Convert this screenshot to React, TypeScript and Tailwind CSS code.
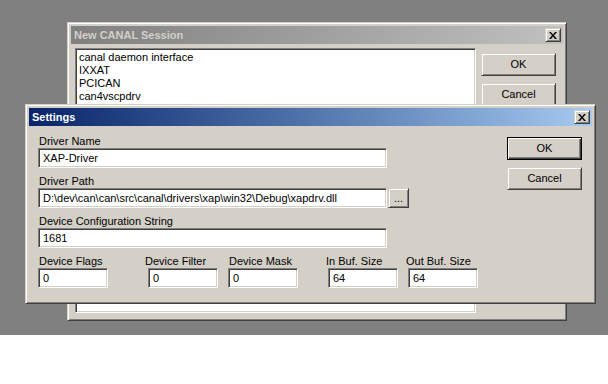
const font = "font-['Liberation_Sans',Arial,sans-serif]";

const raised =
  "bg-[#d4d0c8] border border-[#d4d0c8] border-r-[#404040] border-b-[#404040] shadow-[inset_1px_1px_0_#fff,inset_-1px_-1px_0_#808080]";
const sunken =
  "bg-white border border-[#808080] border-r-white border-b-white shadow-[inset_1px_1px_0_#404040,inset_-1px_-1px_0_#d4d0c8]";

const CloseBox = () => (
  <div className={`${raised} w-[16px] h-[14px] flex items-center justify-center`}>
    <svg width="8" height="7" viewBox="0 0 8 7">
      <path d="M0 0h2l2 2.5 2-2.5h2l-3 3.5 3 3.5h-2l-2-2.5-2 2.5h-2l3-3.5z" fill="#000" />
    </svg>
  </div>
);

const Button = ({ label, isDefault }: { label: string; isDefault?: boolean }) => (
  <div
    className={
      isDefault
        ? "w-[75px] h-[23px] bg-[#d4d0c8] border border-black shadow-[inset_1px_1px_0_#fff,inset_-1px_-1px_0_#404040,inset_-2px_-2px_0_#808080] flex items-center justify-center text-[11px] text-black"
        : `${raised} w-[75px] h-[23px] flex items-center justify-center text-[11px] text-black`
    }
  >
    {label}
  </div>
);

const Field = ({ value, className }: { value: string; className: string }) => (
  <div className={`${sunken} ${className} h-[20px] flex items-center pl-[4px] text-[11px] text-black`}>
    {value}
  </div>
);

const Label = ({ text, className = "" }: { text: string; className?: string }) => (
  <div className={`h-[13px] leading-[13px] text-[11px] text-black whitespace-nowrap ${className}`}>{text}</div>
);

const drivers = ["canal daemon interface", "IXXAT", "PCICAN", "can4vscpdrv"];

const smallFields = [
  { label: "Device Flags", value: "0", box: "ml-0", labelCls: "pl-[1px]", inputCls: "" },
  { label: "Device Filter", value: "0", box: "ml-[37px]", labelCls: "", inputCls: "ml-[3px]" },
  { label: "Device Mask", value: "0", box: "ml-[10px]", labelCls: "pl-[1px]", inputCls: "" },
  { label: "In Buf. Size", value: "64", box: "ml-[28px]", labelCls: "", inputCls: "ml-[2px]" },
  { label: "Out Buf. Size", value: "64", box: "ml-[8px]", labelCls: "", inputCls: "ml-[2px]" },
];

export default function App() {
  return (
    <div className={`w-[608px] h-[384px] bg-white ${font}`}>
      <div className="relative h-[335px] bg-[#808080]">
        {/* background dialog, inactive */}
        <div className={`${raised} absolute left-[67px] top-[22px] w-[500px] h-[299px] p-[3px] flex flex-col`}>
          <div className="h-[18px] bg-gradient-to-r from-[#808080] to-[#c0c0c0] flex items-center justify-between pl-[3px] pr-[2px]">
            <span className="text-[11px] font-bold text-[#d4d0c8]">New CANAL Session</span>
            <CloseBox />
          </div>
          <div className="flex flex-1 pt-[4px] pl-[4px]">
            <div className={`${sunken} w-[401px] h-[265px] pt-[2px] pl-[3px]`}>
              {drivers.map((d) => (
                <div key={d} className="h-[13px] leading-[13px] text-[11px] text-black">
                  {d}
                </div>
              ))}
            </div>
            <div className="ml-[5px] mt-[5px] flex flex-col gap-[7px]">
              <Button label="OK" />
              <Button label="Cancel" />
            </div>
          </div>
        </div>

        {/* settings dialog, active */}
        <div className={`${raised} absolute left-[25px] top-[104px] w-[571px] h-[200px] p-[3px] flex flex-col`}>
          <div className="h-[18px] bg-gradient-to-r from-[#0a246a] to-[#a6caf0] flex items-center justify-between pl-[3px] pr-[2px]">
            <span className="text-[11px] font-bold text-white">Settings</span>
            <CloseBox />
          </div>
          <div className="flex">
            <div className="flex flex-col pl-[9px] pt-[9px]">
              <Label text="Driver Name" className="pl-[1px]" />
              <Field value="XAP-Driver" className="w-[349px]" />
              <Label text="Driver Path" className="pl-[1px] mt-[7px]" />
              <div className="flex">
                <Field value={"D:\\dev\\can\\can\\src\\canal\\drivers\\xap\\win32\\Debug\\xapdrv.dll"} className="w-[349px]" />
                <div className={`${raised} ml-[1px] w-[21px] h-[20px] flex items-end justify-center pb-[3px] text-[11px] leading-[11px] text-black`}>
                  ...
                </div>
              </div>
              <Label text="Device Configuration String" className="pl-[1px] mt-[7px]" />
              <Field value="1681" className="w-[349px]" />
              <div className="flex mt-[7px]">
                {smallFields.map((f) => (
                  <div key={f.label} className={`flex flex-col ${f.box}`}>
                    <Label text={f.label} className={f.labelCls} />
                    <Field value={f.value} className={`w-[70px] ${f.inputCls}`} />
                  </div>
                ))}
              </div>
            </div>
            <div className="ml-auto mr-[10px] mt-[11px] flex flex-col gap-[7px]">
              <Button label="OK" isDefault />
              <Button label="Cancel" />
            </div>
          </div>
        </div>
      </div>
    </div>
  );
}
